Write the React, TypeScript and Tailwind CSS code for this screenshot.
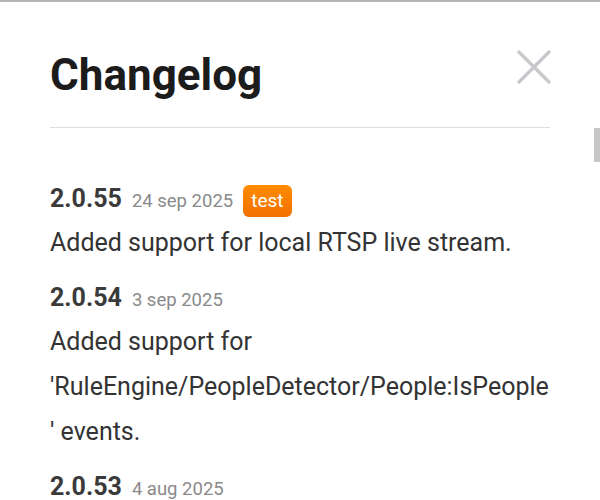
import React from "react";

const ENTRIES: { version: string; date: string; tag?: string; lines: string[] }[] = [
  {
    version: "2.0.55",
    date: "24 sep 2025",
    tag: "test",
    lines: ["Added support for local RTSP live stream."],
  },
  {
    version: "2.0.54",
    date: "3 sep 2025",
    lines: ["Added support for 'RuleEngine/PeopleDetector/People:IsPeople' events."],
  },
  {
    version: "2.0.53",
    date: "4 aug 2025",
    lines: [],
  },
];

export default function App() {
  return (
    <div
      className="relative h-[500px] overflow-hidden bg-white border-t-2 border-[#b4b4b4]"
      style={{ fontFamily: "Roboto, 'Noto Sans', sans-serif" }}
    >
      {/* scrollbar thumb */}
      <div className="absolute right-0 top-[126px] h-[34px] w-[6px] bg-[#c6c6c6]" />

      <div className="px-[50px]">
        {/* Header */}
        <div className="mt-[51px] flex items-start justify-between">
          <h1 className="text-[44px] font-bold leading-[44px] text-[#1c1c1c]">Changelog</h1>
          <button aria-label="Close" className="-mt-[3px] -mr-[1px]">
            <svg width="34" height="34" viewBox="0 0 34 34" fill="none">
              <path
                d="M2 2 L32 32 M32 2 L2 32"
                stroke="#c9c9cd"
                strokeWidth="3.4"
                strokeLinecap="round"
              />
            </svg>
          </button>
        </div>
        <div className="mt-[30px] h-px bg-[#dedede]" />

        {/* Entries */}
        <div className="mt-[55px] flex flex-col gap-[17px]">
          {ENTRIES.map((e) => (
            <div key={e.version} className="flex flex-col gap-[3px]">
              <div className="flex items-baseline gap-[10px] leading-8">
                <span className="text-[25px] font-bold text-[#3a3a3a]">{e.version}</span>
                <span className="text-[18.5px] text-[#8a8a8a]">{e.date}</span>
                {e.tag && (
                  <span className="inline-block rounded-[6px] bg-gradient-to-b from-[#ff8c00] to-[#f27000] px-[8px] text-[19px] leading-[32px] text-white">
                    {e.tag}
                  </span>
                )}
              </div>
              {e.lines.map((l) => (
                <p key={l} className="break-words text-[25px] leading-[45px] text-[#333333]">
                  {l}
                </p>
              ))}
            </div>
          ))}
        </div>
      </div>
    </div>
  );
}
